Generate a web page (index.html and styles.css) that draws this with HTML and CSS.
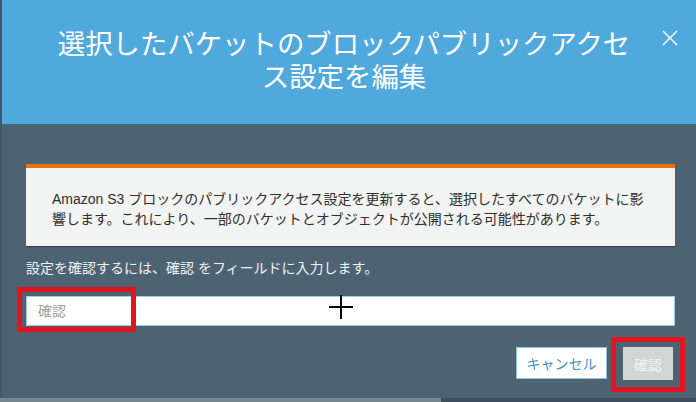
FILE: index.html
```html
<!DOCTYPE html>
<html lang="ja">
<head>
<meta charset="utf-8">
<title>ブロックパブリックアクセス設定を編集</title>
<link rel="stylesheet" href="styles.css">
</head>
<body>
<div class="modal">
  <header class="modal-header">
    <h1 class="title">選択したバケットのブロックパブリックアクセス設定を編集</h1>
    <button class="close" aria-label="閉じる">
      <svg width="20" height="20" viewBox="0 0 20 20"><path d="M3 3 L17 17 M17 3 L3 17" stroke="#fff" stroke-width="1.4" fill="none"/></svg>
    </button>
  </header>
  <main class="modal-body">
    <div class="alert">Amazon S3 ブロックのパブリックアクセス設定を更新すると、選択したすべてのバケットに影響します。これにより、一部のバケットとオブジェクトが公開される可能性があります。</div>
    <p class="label">設定を確認するには、確認 をフィールドに入力します。</p>
    <div class="field">
      <input class="input" type="text" placeholder="確認">
      <span class="mark mark-input"></span>
      <span class="cursor"></span>
    </div>
    <div class="actions">
      <button class="btn btn-cancel">キャンセル</button>
      <div class="confirm-wrap">
        <button class="btn btn-confirm">確認</button>
        <span class="mark mark-confirm"></span>
      </div>
    </div>
  </main>
</div>
<div class="scrollbar"><span class="thumb"></span></div>
</body>
</html>
```

FILE: styles.css
```css
* { box-sizing: border-box; }
html, body { margin: 0; padding: 0; }
body {
  width: 696px;
  height: 402px;
  overflow: hidden;
  font-family: "Liberation Sans", "Noto Sans CJK JP", sans-serif;
  background: #3b505c;
}
.modal {
  height: 398px;
  display: flex;
  flex-direction: column;
  border-left: 2px solid #3f5a6b;
  background: #4e6371;
}
.modal-header {
  position: relative;
  height: 124px;
  background: #50a9dc;
  padding: 28px 0 0 49px;
}
.title {
  margin: 0;
  width: 586px;
  font-size: 27.4px;
  line-height: 33px;
  font-weight: normal;
  color: #fff;
  text-align: center;
}
.close {
  position: absolute;
  left: 658px;
  top: 28px;
  width: 20px;
  height: 20px;
  padding: 0;
  border: 0;
  background: none;
}
.close svg { display: block; }
.modal-body {
  flex: 1;
  padding: 40px 21px 0 24px;
}
.alert {
  background: #f2f3f3;
  border-top: 4px solid #ec7211;
  box-shadow: 0 1px 1px rgba(0, 0, 0, 0.35);
  padding: 21px 21px 17px 26px;
  font-size: 14px;
  line-height: 20px;
  color: #2f2f2f;
}
.label {
  margin: 12px 0 0;
  font-size: 14px;
  line-height: 20px;
  color: #eef2f4;
}
.field {
  position: relative;
  margin-top: 18px;
}
.input {
  display: block;
  width: 100%;
  height: 30px;
  border: 1px solid #9fcbe8;
  background: #fff;
  padding: 0 11px;
  font-family: "Liberation Sans", "Noto Sans CJK JP", sans-serif;
  font-size: 14px;
  color: #333;
  outline: none;
}
.input::placeholder { color: #a0a0a0; }
.mark {
  position: absolute;
  border: 5px solid #e0151f;
  pointer-events: none;
}
.mark-input {
  left: -9px;
  top: -9px;
  width: 119px;
  height: 45px;
}
.cursor {
  position: absolute;
  left: 303px;
  top: -1px;
  width: 24px;
  height: 24px;
  pointer-events: none;
}
.cursor::before, .cursor::after {
  content: "";
  position: absolute;
  background: #000;
}
.cursor::before { left: 11px; top: 0; width: 2px; height: 24px; }
.cursor::after { left: 0; top: 11px; width: 24px; height: 2px; }
.actions {
  display: flex;
  justify-content: flex-end;
  align-items: flex-start;
  gap: 16px;
  margin-top: 21px;
  padding-right: 2px;
}
.btn {
  font-family: "Liberation Sans", "Noto Sans CJK JP", sans-serif;
  font-size: 14px;
  padding: 0;
  cursor: pointer;
}
.btn-cancel {
  width: 91px;
  height: 32px;
  background: #fff;
  border: 1px solid #8ec3e6;
  color: #3f8fc6;
}
.confirm-wrap { position: relative; }
.btn-confirm {
  display: block;
  width: 50px;
  height: 33px;
  background: #d3d4d4;
  border: 0;
  color: #f4f4f4;
}
.mark-confirm {
  left: -12px;
  top: -10px;
  width: 74px;
  height: 55px;
}
.scrollbar {
  height: 4px;
  background: #3b505c;
  display: flex;
}
.thumb {
  width: 441px;
  height: 4px;
  background: #76878f;
}
```
